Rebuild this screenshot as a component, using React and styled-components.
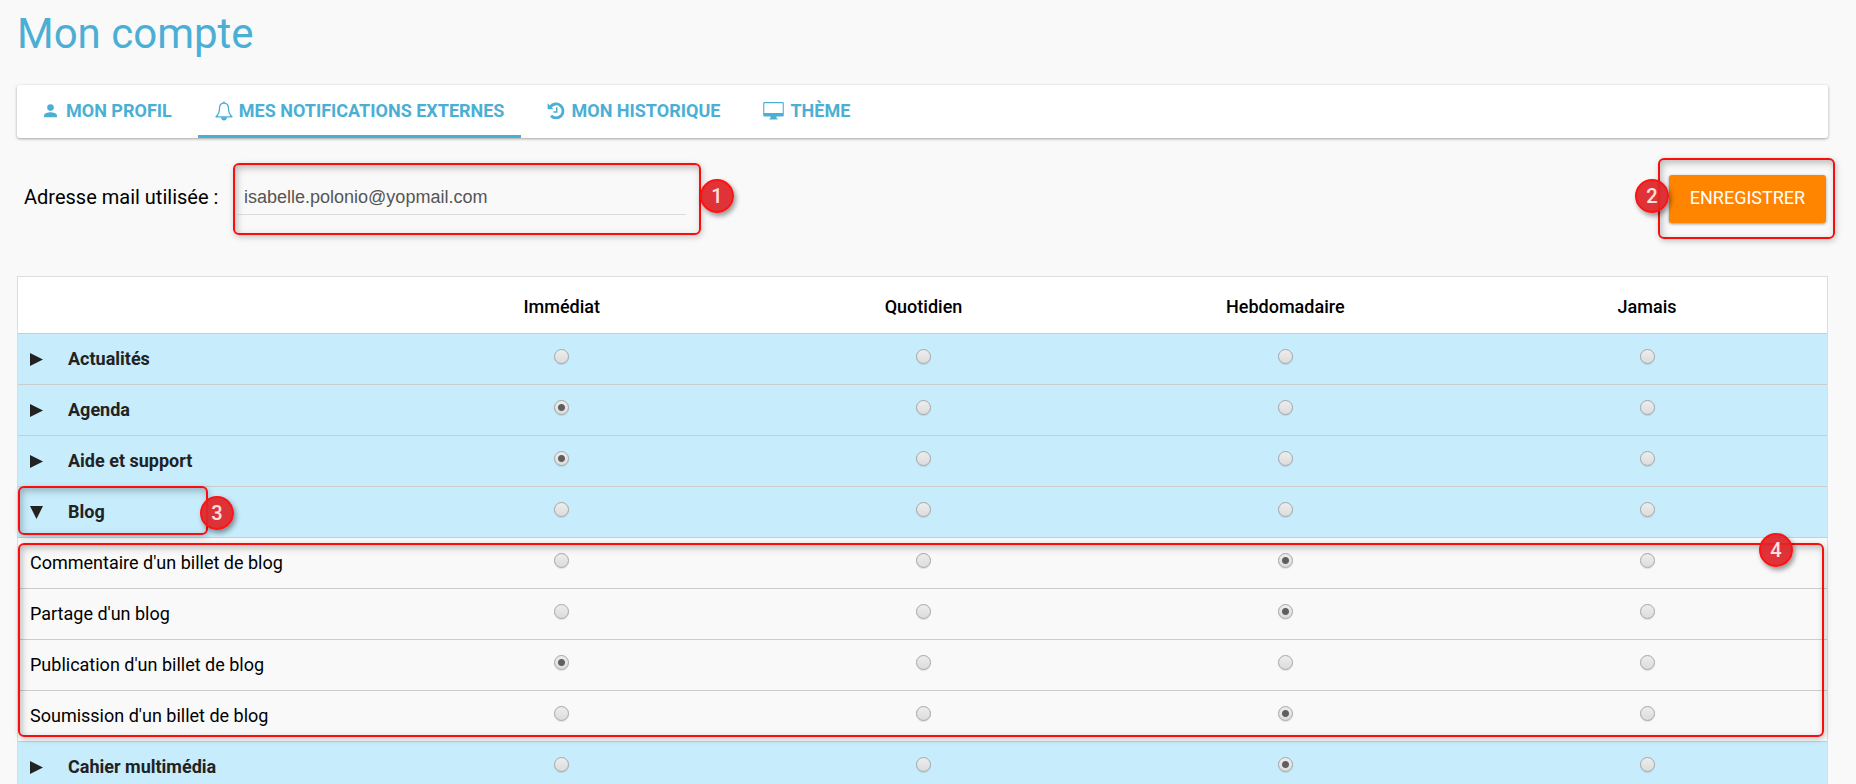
import React, { useState } from "react";
import styled, { createGlobalStyle, css } from "styled-components";

const GlobalStyle = createGlobalStyle`
  *, *::before, *::after { box-sizing: border-box; }
  body {
    margin: 0;
    background: #f9f9f9;
    color: #000;
    font-family: Roboto, "Liberation Sans", sans-serif;
    font-size: 18px;
    line-height: 24px;
  }
`;

const Page = styled.main`
  height: 100vh;
  overflow: hidden;
  padding: 8px 28px 0 17px;
`;

const Title = styled.h1`
  margin: 0 0 25px;
  color: #4bafd5;
  font-size: 42px;
  font-weight: 400;
  line-height: 52px;
`;

const Tabs = styled.nav`
  display: flex;
  height: 53px;
  margin-bottom: 29px;
  background: #fff;
  border-radius: 3px;
  box-shadow: 0 1px 3px rgba(0, 0, 0, 0.35);
`;

const Tab = styled.a`
  display: flex;
  align-items: center;
  gap: ${(p) => p.$gap || 6}px;
  padding: 1px ${(p) => (p.$wide ? 26 : 17)}px 0;
  border-bottom: 3px solid ${(p) => (p.$active ? "#4bafd5" : "transparent")};
  color: #4bafd5;
  font-weight: 700;
  text-decoration: none;
  text-transform: uppercase;
  svg { display: block; flex: none; }
`;

const Settings = styled.form`
  display: flex;
  align-items: center;
  height: 64px;
  margin-bottom: 45px;
  padding: 0 2px 0 7px;
`;

const Label = styled.label`
  flex: none;
  width: 214px;
  padding-bottom: 4px;
  font-size: 20px;
`;

const Field = styled.div`
  position: relative;
  width: 448px;
`;

const MailInput = styled.input`
  display: block;
  width: 100%;
  height: 32px;
  padding: 0 6px 2px;
  border: 0;
  border-bottom: 1px solid #ddd;
  outline: 0;
  background: transparent;
  color: #555;
  font-family: "Liberation Sans", Arial, sans-serif;
  font-size: 18px;
`;

const SaveArea = styled.div`
  position: relative;
  margin-left: auto;
`;

const SaveButton = styled.button`
  display: block;
  width: 157px;
  height: 48px;
  padding: 0 0 2px;
  border: 0;
  border-radius: 3px;
  background: #ff8500;
  box-shadow: 0 1px 3px rgba(0, 0, 0, 0.4);
  color: #fff;
  font: 400 18px/24px Roboto, sans-serif;
  text-transform: uppercase;
`;

const Grid = styled.table`
  width: 100%;
  table-layout: fixed;
  border-collapse: separate;
  border-spacing: 0;
  border: 1px solid #ddd;
  border-bottom: 0;
`;

const HeadCell = styled.th`
  height: 57px;
  padding: 4px 0 0 2px;
  border-bottom: 1px solid #ccc;
  background: #fff;
  font-weight: 500;
`;

const Group = styled.tbody`
  position: relative;
`;

const Row = styled.tr`
  background: ${(p) => (p.$group ? "#c7ecfc" : "transparent")};
`;

const NameCell = styled.th`
  position: ${(p) => (p.$anchor ? "relative" : "static")};
  height: 51px;
  padding: 0 12px;
  border-bottom: 1px solid #ccc;
  font-weight: ${(p) => (p.$group ? 700 : 400)};
  text-align: left;
  white-space: nowrap;
`;

const ChoiceCell = styled.td`
  padding: 0 0 5px 2px;
  border-bottom: 1px solid #ccc;
  text-align: center;
`;

const Toggle = styled.button`
  display: flex;
  align-items: center;
  gap: 25px;
  padding: 0;
  border: 0;
  background: transparent;
  color: #222;
  font: inherit;
`;

const Radio = styled.input`
  appearance: none;
  display: block;
  width: 15px;
  height: 15px;
  margin: 0 auto;
  border: 1px solid #a6a6a6;
  border-radius: 50%;
  background: ${(p) =>
    p.checked
      ? "radial-gradient(circle, #5f5f5f 3px, transparent 4px), "
      : ""}linear-gradient(#ededed, #dcdcdc);
  box-shadow: 0 1px 1px rgba(0, 0, 0, 0.1);
`;

const Outline = styled.span`
  position: absolute;
  z-index: 1;
  border: 2px solid #f80e0e;
  border-radius: 6px;
  box-shadow: 1px 2px 6px rgba(0, 0, 0, 0.22), inset 2px 3px 7px rgba(0, 0, 0, 0.25);
  pointer-events: none;
  ${(p) => outlines[p.$around]}
`;

const outlines = {
  mail: css`inset: -20px -15px -20px -5px;`,
  save: css`inset: -17px -9px -16px -11px;`,
  group: css`top: -1px; left: 0; width: 190px; height: 49px;`,
  items: css`inset: 5px 3px 5px 0;`,
};

const Badge = styled.span`
  position: absolute;
  z-index: 2;
  display: flex;
  align-items: center;
  justify-content: center;
  width: 34px;
  height: 34px;
  border: 2px solid #fb1414;
  border-radius: 50%;
  background: rgba(222, 38, 42, 0.94);
  box-shadow: 2px 3px 5px rgba(0, 0, 0, 0.4);
  color: #fde0e0;
  font: 500 20px/30px Roboto, sans-serif;
  ${(p) => badges[p.$around]}
`;

const badges = {
  mail: css`right: -48px; top: -4px;`,
  save: css`left: -34px; top: 4px;`,
  group: css`left: 182px; top: 9px;`,
  items: css`right: 34px; top: -5px;`,
};

const Callout = ({ around, number }) => (
  <>
    <Outline $around={around} />
    <Badge $around={around}>{number}</Badge>
  </>
);

const PersonIcon = () => (
  <svg width="15" height="14" viewBox="0 0 15 14" fill="currentColor" aria-hidden="true">
    <circle cx="7.5" cy="3.6" r="3.3" />
    <path d="M1 13.2v-1.7C1 9.2 5 8.2 7.5 8.2s6.500 1 6.500 3.300v1.700z" />
  </svg>
);

const BellIcon = () => (
  <svg width="18" height="20" viewBox="0 0 18 20" fill="none" stroke="currentColor" aria-hidden="true">
    <path strokeWidth="1.300" strokeLinejoin="round" d="M9 2.200C5.800 2.200 4.500 4.500 4.500 7.500c0 4.200-1.200 6.300-3.500 8.300h16c-2.300-2-3.500-4.100-3.500-8.300 0-3-1.300-5.300-4.500-5.300z" />
    <path strokeWidth="1.500" d="M9 .5v2" />
    <path fill="currentColor" stroke="none" d="M6 16.200h6c-.2 2-1.300 3.300-3 3.300s-2.800-1.300-3-3.300z" />
  </svg>
);

const HistoryIcon = () => (
  <svg width="18" height="18" viewBox="0 0 18 18" fill="none" stroke="currentColor" aria-hidden="true">
    <path strokeWidth="2.800" d="M3.400 4.800A7 7 0 1 1 4 13.800" />
    <path fill="currentColor" stroke="none" d="M.6 1.200v6h6z" />
    <path strokeWidth="1.500" d="M9.700 5.200v4.700H6.400" />
  </svg>
);

const ScreenIcon = () => (
  <svg width="21" height="18" viewBox="0 0 21 18" fill="currentColor" aria-hidden="true">
    <path fillRule="evenodd" d="M1.500 0h18c.8 0 1.300.5 1.300 1.300v11.900c0 .8-.5 1.300-1.300 1.300h-6v1.700h1v1.300h-8v-1.300h1v-1.700h-6c-.8 0-1.300-.5-1.300-1.300V1.300C.2.500.7 0 1.500 0zM1.300 1.200v9.800h18.400V1.200z" />
  </svg>
);

const columns = ["Immédiat", "Quotidien", "Hebdomadaire", "Jamais"];

const groups = [
  { name: "Actualités", choice: null },
  { name: "Agenda", choice: 0 },
  { name: "Aide et support", choice: 0 },
  {
    name: "Blog",
    choice: null,
    marked: true,
    items: [
      { name: "Commentaire d'un billet de blog", choice: 2 },
      { name: "Partage d'un blog", choice: 2 },
      { name: "Publication d'un billet de blog", choice: 0 },
      { name: "Soumission d'un billet de blog", choice: 2 },
    ],
  },
  { name: "Cahier multimédia", choice: 2 },
];

const Choices = ({ name, choice, onChoose }) =>
  columns.map((column, i) => (
    <ChoiceCell key={column}>
      <Radio
        type="radio"
        name={name}
        aria-label={`${name} : ${column}`}
        checked={choice === i}
        onChange={() => onChoose(name, i)}
      />
    </ChoiceCell>
  ));

export default function App() {
  const [mail, setMail] = useState("isabelle.polonio@yopmail.com");
  const [open, setOpen] = useState("Blog");
  const [chosen, setChosen] = useState({});
  const choose = (name, i) => setChosen((c) => ({ ...c, [name]: i }));
  const value = (entry) => chosen[entry.name] ?? entry.choice;

  return (
    <>
      <GlobalStyle />
      <Page>
        <Title>Mon compte</Title>
        <Tabs>
          <Tab href="#profil" $wide $gap={8}><PersonIcon />Mon profil</Tab>
          <Tab href="#notifications" $active><BellIcon />Mes notifications externes</Tab>
          <Tab href="#historique" $wide><HistoryIcon />Mon historique</Tab>
          <Tab href="#theme"><ScreenIcon />Thème</Tab>
        </Tabs>
        <Settings onSubmit={(e) => e.preventDefault()}>
          <Label htmlFor="mail">Adresse mail utilisée :</Label>
          <Field>
            <MailInput id="mail" type="email" value={mail} onChange={(e) => setMail(e.target.value)} />
            <Callout around="mail" number={1} />
          </Field>
          <SaveArea>
            <SaveButton type="submit">Enregistrer</SaveButton>
            <Callout around="save" number={2} />
          </SaveArea>
        </Settings>
        <Grid>
          <thead>
            <tr>
              <HeadCell as="td" />
              {columns.map((c) => <HeadCell key={c} scope="col">{c}</HeadCell>)}
            </tr>
          </thead>
          {groups.map((g) => (
            <React.Fragment key={g.name}>
              <Group>
                <Row $group>
                  <NameCell scope="row" $group $anchor={g.marked}>
                    <Toggle
                      type="button"
                      aria-expanded={open === g.name}
                      onClick={() => setOpen(open === g.name ? null : g.name)}
                    >
                      <svg width="13" height="13" viewBox="0 0 13 13" fill="currentColor" aria-hidden="true">
                        <path d={open === g.name ? "M0 0h13L6.500 13z" : "M0 0l13 6.500L0 13z"} />
                      </svg>
                      {g.name}
                    </Toggle>
                    {g.marked && <Callout around="group" number={3} />}
                  </NameCell>
                  <Choices name={g.name} choice={value(g)} onChoose={choose} />
                </Row>
              </Group>
              {g.items && open === g.name && (
                <Group>
                  {g.items.map((item, i) => (
                    <Row key={item.name}>
                      <NameCell scope="row">
                        {item.name}
                        {i === 0 && <Callout around="items" number={4} />}
                      </NameCell>
                      <Choices name={item.name} choice={value(item)} onChoose={choose} />
                    </Row>
                  ))}
                </Group>
              )}
            </React.Fragment>
          ))}
        </Grid>
      </Page>
    </>
  );
}
